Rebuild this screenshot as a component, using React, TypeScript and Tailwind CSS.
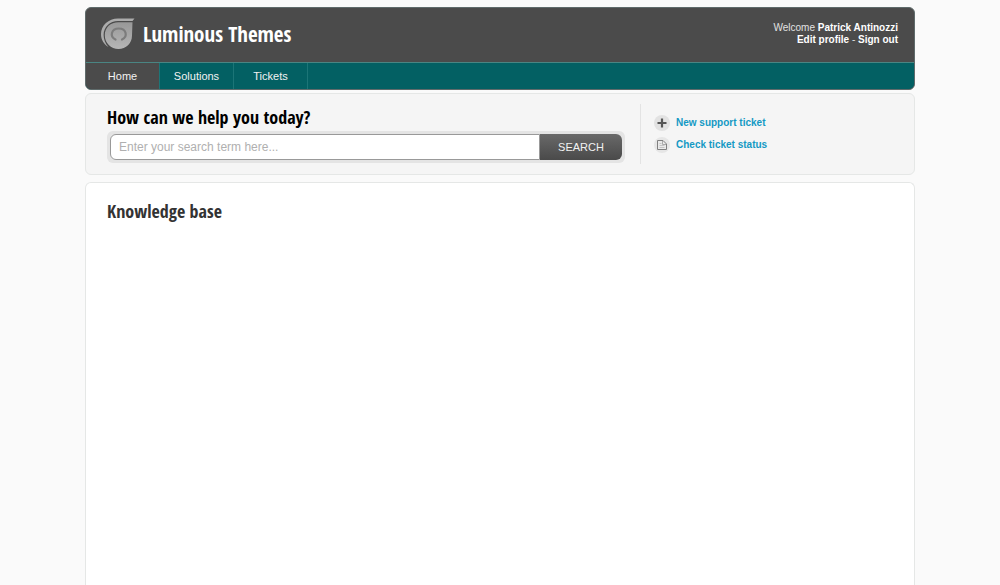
import React from "react";

const headingFont =
  "font-['Open_Sans_Condensed','Liberation_Sans_Narrow','Open_Sans',sans-serif] font-bold";

function Logo() {
  return (
    <svg viewBox="0 0 34 32" className="h-8 w-[34px]" aria-hidden="true">
      <defs>
        <linearGradient id="swirl" x1="0" y1="0" x2="0" y2="1">
          <stop offset="0" stopColor="#989898" />
          <stop offset="1" stopColor="#b6b6b6" />
        </linearGradient>
      </defs>
      <path
        d="M33.500 0.500H17C7.500 0.500 0 7.500 0 16c0 6 3 10.500 7.500 13C4.500 26 2.600 21.500 2.600 17 2.600 9 9 3 17 3H31.500Z"
        fill="#acacac"
      />
      <path
        d="M31.500 4.200H17.500C9.500 4.200 3.800 9.500 3.800 17.200S10 31 17.500 31 31 25.500 31 17.500Z"
        fill="url(#swirl)"
      />
      <path
        d="M14.500 21.500C8.500 19 10 10.500 17.800 10.500S27 19 21 21.500"
        fill="none"
        stroke="#7c7c7c"
        strokeWidth="2.200"
        strokeLinecap="round"
      />
    </svg>
  );
}

function PlusIcon() {
  return (
    <svg viewBox="0 0 16 16" className="size-4" aria-hidden="true">
      <circle cx="8" cy="8" r="8" fill="#e2e2e2" />
      <path d="M8 3.500v9M3.500 8h9" stroke="#555" strokeWidth="2.200" />
    </svg>
  );
}

function NoteIcon() {
  return (
    <svg viewBox="0 0 16 16" className="size-4" aria-hidden="true">
      <circle cx="8" cy="8" r="8" fill="#e6e6e6" />
      <path
        d="M3.500 3.500h5.500l3.500 3.500v5.500h-9Z"
        fill="#e9e9e9"
        stroke="#808080"
        strokeLinejoin="round"
      />
      <path d="M8.500 4v3.500H12" fill="none" stroke="#aaa" />
      <path d="M5.500 6.500h2M5.500 8.500h5M5.500 10.500h5" stroke="#c4c4c4" />
    </svg>
  );
}

const tabs = ["Home", "Solutions", "Tickets"];

const actions = [
  { label: "New support ticket", Icon: PlusIcon },
  { label: "Check ticket status", Icon: NoteIcon },
];

export default function App() {
  return (
    <div className="flex min-h-screen flex-col bg-[#fafafa] px-4 pt-[7px] font-['Liberation_Sans',Arial,sans-serif]">
      <div className="mx-auto flex w-full max-w-[830px] grow flex-col">
        <header className="overflow-hidden rounded-md border border-[#5f6b6b] bg-[#4b4b4b]">
          <div className="flex h-[54px] items-start justify-between pr-4 pl-[15px]">
            <a href="#home" className="flex items-center gap-2 pt-[10px]">
              <Logo />
              <span className={`text-[21px] leading-8 text-white ${headingFont}`}>
                Luminous Themes
              </span>
            </a>
            <div className="pt-[14px] text-right text-[10px] leading-3 text-[#e2e2e2]">
              <p>
                Welcome <strong className="text-white">Patrick Antinozzi</strong>
              </p>
              <p>
                <a href="#profile" className="font-bold text-white">Edit profile</a>
                {" - "}
                <a href="#signout" className="font-bold text-white">Sign out</a>
              </p>
            </div>
          </div>
          <nav className="flex h-[27px] border-t border-[#4a8583] bg-[#036063]">
            {tabs.map((tab, i) => (
              <a
                key={tab}
                href={`#${tab.toLowerCase()}`}
                aria-current={i === 0 ? "page" : undefined}
                className={`flex w-[74px] items-center justify-center border-r border-[#1c7577] text-[11px] text-[#f2f2f2] ${i === 0 ? "bg-[#4b4b4b]" : ""}`}
              >
                {tab}
              </a>
            ))}
          </nav>
        </header>

        <section className="mt-[3px] flex h-[82px] items-center rounded-md border border-[#e5e7e6] bg-[#f5f5f5] px-[21px]">
          <form className="w-[518px]" onSubmit={(e) => e.preventDefault()}>
            <label htmlFor="search" className={`block text-lg leading-6 text-black ${headingFont}`}>
              How can we help you today?
            </label>
            <div className="mt-[2px] flex h-8 rounded-md bg-[#e4e4e4] p-[3px]">
              <input
                id="search"
                type="text"
                placeholder="Enter your search term here..."
                className="min-w-0 grow rounded-l-md border border-[#999] bg-white px-2 text-xs text-[#444] outline-none placeholder:text-[#b0b0b0]"
              />
              <button
                type="submit"
                className="w-[82px] rounded-r-md bg-linear-to-b from-[#696969] to-[#4a4a4a] text-[11px] text-[#f2f2f2]"
              >
                SEARCH
              </button>
            </div>
          </form>
          <ul className="ml-[15px] flex h-[60px] flex-col justify-center gap-[6px] border-l border-[#e3e3e3] pl-[13px]">
            {actions.map(({ label, Icon }) => (
              <li key={label}>
                <a href="#tickets" className="flex items-center gap-[6px] text-[10px] leading-4 font-bold text-[#1499c4]">
                  <Icon />
                  {label}
                </a>
              </li>
            ))}
          </ul>
        </section>

        <main className="mt-[7px] grow rounded-t-md border border-b-0 border-[#e5e7e6] bg-white px-[21px] pt-4">
          <h2 className={`text-lg leading-6 text-[#333] ${headingFont}`}>Knowledge base</h2>
        </main>
      </div>
    </div>
  );
}
